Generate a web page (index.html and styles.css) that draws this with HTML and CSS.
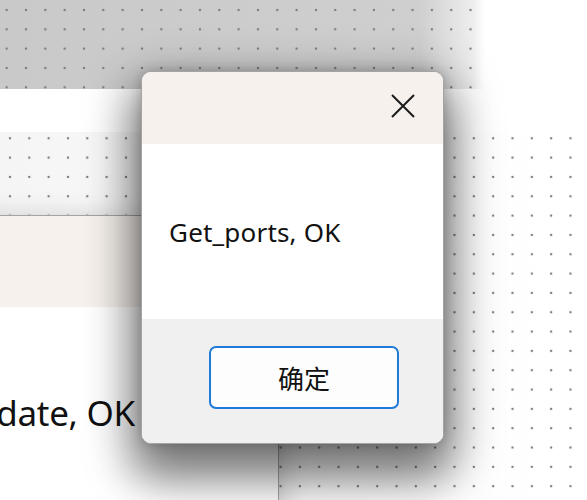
FILE: index.html
```html
<!DOCTYPE html>
<html lang="zh-CN">
<head>
  <meta charset="UTF-8" />
  <meta name="viewport" content="width=device-width, initial-scale=1.0"/>
  <title>Get_ports</title>
  <link rel="stylesheet" href="styles.css">
</head>
<body>

<div class="desktop">
  <div class="strip-top"></div>
  <div class="band"></div>
  <div class="field"></div>

  <!-- dialog left behind -->
  <div class="dialog back">
    <div class="titlebar"></div>
    <div class="content">
      <p class="message">Check_update, OK</p>
    </div>
  </div>

  <!-- active message box -->
  <div class="dialog front">
    <div class="titlebar">
      <button class="close" aria-label="关闭">
        <svg width="24" height="24" viewBox="0 0 24 24">
          <path d="M1 1 L23 23 M23 1 L1 23" stroke="#1b1b1b" stroke-width="2" fill="none"/>
        </svg>
      </button>
    </div>
    <div class="content">
      <p class="message">Get_ports, OK</p>
    </div>
    <div class="footer">
      <button class="ok">确定</button>
    </div>
  </div>
</div>

</body>
</html>
```

FILE: styles.css
```css
* {
  box-sizing: border-box;
}

body {
  margin: 0;
  background: #fff;
  font-family: 'Noto Sans', 'Noto Sans CJK SC', sans-serif;
}

.desktop {
  position: relative;
  width: 587px;
  height: 500px;
  overflow: hidden;
  display: flex;
  flex-direction: column;
}

.strip-top {
  height: 89px;
  background:
    linear-gradient(to right, rgba(255, 255, 255, 0) 474px, #fff 486px),
    radial-gradient(circle, #7d7d7d 0.9px, rgba(125, 125, 125, 0) 1.6px) -3px 0.3px / 19.33px 19.33px,
    linear-gradient(to right, #c9c9c9 0, #cfcfcf 420px, #ececec 470px, #fff 500px);
}

.band {
  height: 43px;
  background: #fff;
}

.field {
  flex: 1;
  background:
    radial-gradient(circle, #7d7d7d 0.9px, rgba(125, 125, 125, 0) 1.6px) 0.3px -3.4px / 19.33px 19.33px,
    linear-gradient(to right, #f5f5f5 0, #fbfbfb 300px, #fff 560px);
}

.dialog {
  position: absolute;
  display: flex;
  flex-direction: column;
  background: #fff;
  border: 1px solid #a4a4a4;
  border-radius: 10px;
  overflow: hidden;
}

.titlebar {
  background: #f6f1ec;
  display: flex;
  justify-content: flex-end;
  align-items: center;
}

.message {
  margin: 0;
  color: #111;
  white-space: nowrap;
}

/* the one behind */
.back {
  left: -220px;
  top: 215px;
  width: 499px;
  height: 400px;
  box-shadow: 0 6px 30px rgba(0, 0, 0, 0.22);
}

.back .titlebar {
  height: 91px;
}

.back .content {
  padding: 82px 0 0 60px;
}

.back .message {
  font-size: 35px;
  letter-spacing: -0.3px;
}

/* the one on top */
.front {
  left: 141px;
  top: 71px;
  width: 303px;
  height: 373px;
  box-shadow:
    0 30px 40px 6px rgba(0, 0, 0, 0.28),
    0 18px 50px 8px rgba(0, 0, 0, 0.4),
    0 0 12px rgba(0, 0, 0, 0.18);
}

.front .titlebar {
  height: 72px;
  padding-right: 28px;
}

.close {
  border: none;
  background: none;
  padding: 0;
  width: 24px;
  height: 24px;
  display: flex;
  margin-top: -4px;
}

.front .content {
  height: 175px;
  display: flex;
  align-items: center;
  padding-left: 27px;
}

.front .message {
  font-size: 26px;
  letter-spacing: 0.2px;
}

.footer {
  flex: 1;
  background: #f0f0f0;
  display: flex;
  justify-content: flex-end;
  align-items: flex-start;
  padding: 27px 44px 0 0;
}

.ok {
  width: 190px;
  height: 63px;
  background: #fdfdfd;
  border: 2px solid #1f7ad8;
  border-radius: 7px;
  font-family: 'Noto Sans CJK SC', sans-serif;
  font-size: 26px;
  color: #111;
  cursor: pointer;
}
```
